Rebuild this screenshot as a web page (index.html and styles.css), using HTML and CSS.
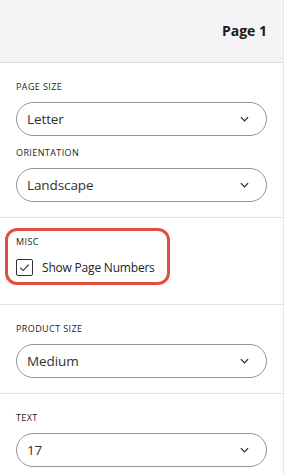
FILE: index.html
```html
<!DOCTYPE html>
<html>
<head>
<meta charset="utf-8">
<link rel="stylesheet" href="styles.css">
</head>
<body>
<div class="panel">
  <header class="header"><span class="title">Page 1</span></header>

  <section class="section">
    <div class="label">Page Size</div>
    <div class="select"><span>Letter</span><svg class="chev" viewBox="0 0 10 6"><path d="M1 1l4 4 4-4"/></svg></div>
    <div class="label label-gap">Orientation</div>
    <div class="select"><span>Landscape</span><svg class="chev" viewBox="0 0 10 6"><path d="M1 1l4 4 4-4"/></svg></div>
  </section>

  <section class="section section-misc">
    <div class="highlight">
      <div class="label">Misc</div>
      <label class="check-row">
        <span class="checkbox"><svg viewBox="0 0 16 16"><path d="M3.5 8.2l3 3 6-6.2"/></svg></span>
        <span class="check-text">Show Page Numbers</span>
      </label>
    </div>
  </section>

  <section class="section">
    <div class="label">Product Size</div>
    <div class="select"><span>Medium</span><svg class="chev" viewBox="0 0 10 6"><path d="M1 1l4 4 4-4"/></svg></div>
  </section>

  <section class="section">
    <div class="label">Text</div>
    <div class="select"><span>17</span><svg class="chev" viewBox="0 0 10 6"><path d="M1 1l4 4 4-4"/></svg></div>
  </section>
</div>
</body>
</html>
```

FILE: styles.css
```css
* { box-sizing: border-box; }
html, body { margin: 0; padding: 0; background: #fff; }
body {
  font-family: "Open Sans", "Noto Sans", sans-serif;
  color: #252423;
  overflow: hidden;
}
.panel {
  width: 284px;
  height: 475px;
  border-right: 1px solid #e6e6e6;
}
.header {
  height: 63px;
  background: #f4f4f6;
  border-bottom: 1px solid #dcdcdc;
  display: flex;
  align-items: center;
  justify-content: flex-end;
  padding: 0 16px 2px 0;
}
.title {
  font-weight: 700;
  font-size: 14px;
  color: #1b1a19;
}
.section {
  padding: 17px 16px 15px 16px;
  border-bottom: 1px solid #e1e1e1;
}
.label {
  font-size: 9px;
  line-height: 14px;
  text-transform: uppercase;
  letter-spacing: 0.4px;
  color: #252423;
  margin-bottom: 8px;
}
.label-gap { margin-top: 10px; }
.select {
  height: 34px;
  border: 1px solid #949494;
  border-radius: 17px;
  display: flex;
  align-items: center;
  justify-content: space-between;
  padding: 0 17px 0 10px;
  font-size: 13.5px;
  letter-spacing: -0.1px;
  color: #323130;
}
.chev {
  width: 9px;
  height: 6px;
  fill: none;
  stroke: #252423;
  stroke-width: 1.3;
}
.section-misc { padding-bottom: 19px; }
.highlight {
  width: fit-content;
  margin: -7px 0 0 -11px;
  padding: 4px 12px 5px 8px;
  border: 3px solid #e1503e;
  border-radius: 12px;
}
.highlight .label { margin-bottom: 8px; }
.check-row {
  display: flex;
  align-items: center;
  gap: 9px;
  height: 20px;
}
.checkbox {
  width: 17px;
  height: 17px;
  border: 1px solid #323130;
  border-radius: 2px;
  display: flex;
}
.checkbox svg {
  width: 15px;
  height: 15px;
  fill: none;
  stroke: #252423;
  stroke-width: 1.1;
}
.check-text {
  font-size: 12px;
  letter-spacing: -0.2px;
  color: #252423;
}
```
